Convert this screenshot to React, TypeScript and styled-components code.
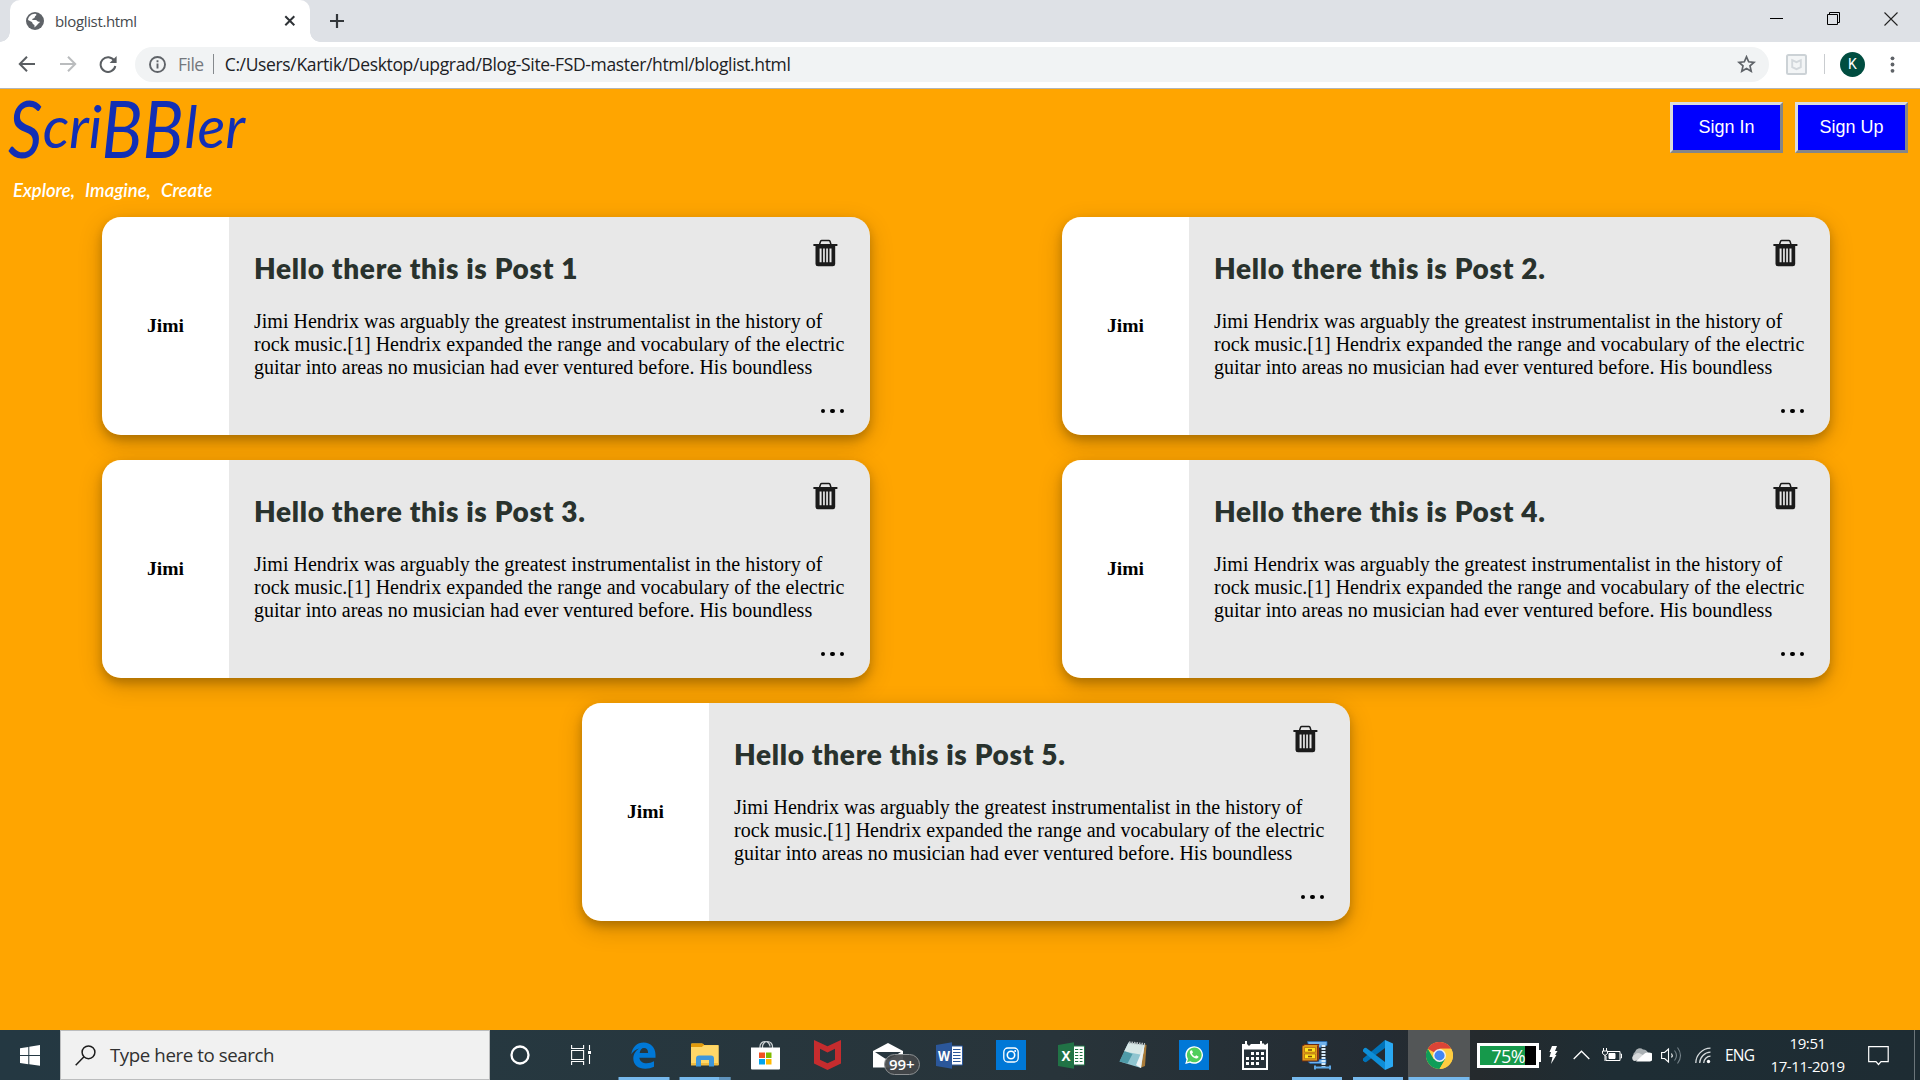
import React from 'react';
import styled, { createGlobalStyle } from 'styled-components';

const GlobalStyle = createGlobalStyle`
  * { box-sizing: border-box; }
  html, body { margin: 0; padding: 0; background: #ffa500; overflow: hidden; }
  svg { flex: none; display: block; }
`;

const ui = `'Open Sans', 'Noto Sans', sans-serif`;

const Screen = styled.div`
  display: flex;
  flex-direction: column;
  width: 1920px;
  height: 1080px;
  overflow: hidden;
  font-family: ${ui};
`;

/* ---------- browser ---------- */

const TabStrip = styled.header`
  display: flex;
  align-items: stretch;
  height: 42px;
  flex: none;
  padding-left: 10px;
  background: #dee1e6;
`;

const Tab = styled.div`
  position: relative;
  display: flex;
  align-items: center;
  width: 300px;
  padding: 0 14px 0 16px;
  background: #fff;
  border-radius: 10px 10px 0 0;
  &::before, &::after {
    content: '';
    position: absolute;
    bottom: 0;
    width: 10px;
    height: 10px;
  }
  &::before { left: -10px; background: radial-gradient(circle at 0 0, #dee1e6 9.5px, #fff 10px); }
  &::after { right: -10px; background: radial-gradient(circle at 100% 0, #dee1e6 9.5px, #fff 10px); }
`;

const TabTitle = styled.span`
  flex: 1;
  margin-left: 11px;
  color: #45494d;
  font-size: 15px;
  line-height: 20px;
  padding-bottom: 1px;
  letter-spacing: -0.35px;
`;

const NewTab = styled.div`
  display: flex;
  align-items: center;
  margin-left: 19px;
`;

const WindowButtons = styled.div`
  display: flex;
  align-items: center;
  margin-left: auto;
  height: 37px;
`;

const WindowButton = styled.div`
  display: flex;
  justify-content: center;
  width: 57px;
  padding-right: 1px;
`;

const Toolbar = styled.div`
  display: flex;
  align-items: center;
  height: 47px;
  flex: none;
  padding: 0 18px 2px 18px;
  background: #fff;
  border-bottom: 1px solid #b3b5b8;
`;

const NavIcon = styled.div<{ $gap: number }>`
  display: flex;
  margin-right: ${p => p.$gap}px;
`;

const Omnibox = styled.div`
  display: flex;
  align-items: center;
  width: 1634px;
  height: 35px;
  padding: 0 13px 0 14px;
  border-radius: 18px;
  background: #f1f3f4;
  font-size: 17.5px;
`;

const Scheme = styled.span`
  margin-left: 12px;
  color: #74787d;
  letter-spacing: -0.5px;
`;

const Rule = styled.span<{ $h: number; $color: string; $left?: number }>`
  flex: none;
  width: 1px;
  height: ${p => p.$h}px;
  margin-left: ${p => p.$left ?? 0}px;
  background: ${p => p.$color};
`;

const Url = styled.span`
  flex: 1;
  margin-left: 11px;
  color: #202124;
  white-space: nowrap;
  letter-spacing: -0.35px;
`;

const Extensions = styled.div`
  display: flex;
  align-items: center;
  margin-left: 17px;
`;

const Avatar = styled.div`
  display: grid;
  place-items: center;
  width: 25px;
  height: 25px;
  margin: 0 25px 0 15px;
  border-radius: 50%;
  background: #004d40;
  color: #fff;
  font: 14px Roboto, sans-serif;
`;

/* ---------- page ---------- */

const Page = styled.main`
  flex: 1;
  background: #ffa500;
`;

const PageHeader = styled.div`
  display: flex;
  justify-content: space-between;
  height: 128px;
  padding: 13px 12px 0 9px;
`;

const Brand = styled.div`
  margin-top: -5px;
  color: #122fb5;
  font-family: Lato, sans-serif;
  font-style: italic;
`;

const Wordmark = styled.div`
  height: 81px;
  line-height: 58px;
  font-size: 58px;
  white-space: nowrap;
`;

const Capital = styled.span`
  display: inline-block;
  margin: 0 -3px 0 -4px;
  font-size: 80px;
  line-height: 50px;
  vertical-align: -10px;
  transform: scaleX(0.85);
`;

const Tagline = styled.div`
  margin-left: 4px;
  color: #fff;
  font-size: 18.5px;
  font-weight: 600;
  line-height: 24px;
  white-space: nowrap;
  word-spacing: 6px;
`;

const Actions = styled.div`
  display: flex;
  gap: 12px;
`;

const ActionButton = styled.button`
  width: 113px;
  height: 51px;
  padding: 0;
  border: 3px solid;
  border-color: #dcdcdc #868686 #868686 #dcdcdc;
  background: #0000ff;
  color: #fff;
  font: 18px 'Liberation Sans', Arial, sans-serif;
`;

const Posts = styled.section`
  display: flex;
  flex-wrap: wrap;
  justify-content: center;
  gap: 25px 192px;
  width: 1728px;
  margin-left: 102px;
`;

const Card = styled.article`
  display: flex;
  width: 768px;
  height: 218px;
  border-radius: 19px;
  overflow: hidden;
  box-shadow: 0 5px 10px rgba(0, 0, 0, 0.2), 0 7.5px 25px rgba(0, 0, 0, 0.19);
`;

const Author = styled.div`
  display: grid;
  place-items: center;
  flex: none;
  width: 127px;
  background: #fff;
  color: #000;
  font: bold 19.6px 'Liberation Serif', 'Times New Roman', serif;
`;

const PostBody = styled.div`
  flex: 1;
  min-width: 0;
  display: flex;
  flex-direction: column;
  padding: 22px 25px 0;
  background: #e8e8e8;
`;

const PostHead = styled.div`
  display: flex;
  justify-content: space-between;
  height: 71px;
  padding-right: 7px;
`;

const PostTitle = styled.h2`
  margin: 11px 0 0;
  color: #29322d;
  font: 800 28px/36px Lato, sans-serif;
  letter-spacing: 0.68px;
`;

const PostText = styled.p`
  margin: 0;
  color: #000;
  font: 20px/23px 'Liberation Serif', 'Times New Roman', serif;
  white-space: pre;
`;

const More = styled.div`
  display: flex;
  gap: 5px;
  align-self: flex-end;
  margin-top: 30px;
  margin-right: 1px;
`;

const Dot = styled.i`
  width: 4.4px;
  height: 4.4px;
  border-radius: 50%;
  background: #000;
`;

/* ---------- taskbar ---------- */

const Taskbar = styled.footer`
  display: flex;
  height: 50px;
  flex: none;
  background: linear-gradient(90deg, #243842 0, #263840 25%, #28343a 55%, #242c33 72%, #252a2d 77%, #1e2d34 84%, #1e2c33 100%);
  color: #fff;
`;

const Cell = styled.div<{ $w: number; $active?: boolean }>`
  position: relative;
  display: flex;
  align-items: center;
  justify-content: center;
  flex: none;
  width: ${p => p.$w}px;
  background: ${p => (p.$active ? '#535657' : 'transparent')};
`;

const Underline = styled.span<{ $w: number }>`
  position: absolute;
  left: 50%;
  bottom: 0;
  width: ${p => p.$w}px;
  height: 3px;
  transform: translateX(-50%);
  background: #76b9ed;
`;

const UnderlineTail = styled.span`
  position: absolute;
  right: 5px;
  bottom: 0;
  width: 11px;
  height: 3px;
  background: #5f93bd;
`;

const SearchBox = styled.div`
  display: flex;
  align-items: center;
  flex: none;
  width: 430px;
  padding-left: 14px;
  border: 1px solid #bcbdbe;
  background: #f1f1f1;
  color: #303030;
  font-size: 18.7px;
  letter-spacing: -0.42px;
`;

const SearchText = styled.span`
  margin-left: 14px;
  padding-bottom: 1px;
`;

const MailBadge = styled.span`
  position: absolute;
  left: 26px;
  top: 24px;
  width: 36px;
  height: 21px;
  border: 1px solid #8d9193;
  border-radius: 11px;
  background: rgba(68, 71, 73, 0.93);
  font-size: 15px;
  font-weight: 600;
  line-height: 19px;
  text-align: center;
`;

const Battery = styled.div`
  position: relative;
  flex: none;
  width: 62px;
  height: 25px;
  margin-left: -1px;
  border: 3px solid #fff;
  background: linear-gradient(90deg, #16994b 45px, #000 45px);
  font-size: 18px;
  line-height: 20px;
  text-align: center;
  letter-spacing: -0.6px;
  &::after {
    content: '';
    position: absolute;
    right: -5px;
    top: 4px;
    width: 2px;
    height: 12px;
    background: #fff;
  }
`;

const Language = styled.span`
  font-size: 15.5px;
  letter-spacing: -0.7px;
`;

const Clock = styled.div`
  font-size: 15px;
  line-height: 23px;
  letter-spacing: -0.4px;
  text-align: center;
  white-space: nowrap;
`;

/* ---------- icons ---------- */

const Globe = () => (
  <svg width="18" height="18" viewBox="0 0 18 18">
    <circle cx="9" cy="9" r="9" fill="#5f6368" />
    <path d="M9 1.800c2 .2 2 1.400.7 2C8.400 4.200 9.500 5.500 8 6.200 6.700 6.700 6.300 6.500 6.300 8h3.200c1.800.2 1.700 1.600 3.400 1.700l1 .1c-.4 1.700-1.800 1.500-2.400 2.700-.6 1.200-1.700 1.300-2.800 2.900-.6-1 .3-2.500-.8-2.800-1.500-.4-1.200-2-2-2.700L2 8.100C2.400 4.600 5.200 1.900 9 1.800Z" fill="#fff" />
    <path d="M10.500 2.100c2.800.5 5 2.700 5.500 5.500l-1.400.8c-1-.1-1-1.300-2.100-1.500-1.400-.2-.5-2-1.700-2.300Z" fill="#5f6368" />
  </svg>
);

const Close = () => (
  <svg width="12" height="12" viewBox="0 0 12 12"><path d="M1.300 1.300l9 9M10.300 1.300l-9 9" stroke="#2f3337" strokeWidth="2" /></svg>
);

const Plus = () => (
  <svg width="16" height="16" viewBox="0 0 16 16"><path d="M8 1v14M1 8h14" stroke="#33373b" strokeWidth="2.200" /></svg>
);

const Arrow = ({ color, flip }: { color: string; flip?: boolean }) => (
  <svg width="18" height="18" viewBox="0 0 18 18" fill="none" stroke={color} strokeWidth="2">
    <path d={flip ? 'M1 9h15M9 1.800L16.200 9 9 16.200' : 'M17 9H2M9 1.800L1.800 9 9 16.200'} />
  </svg>
);

const Reload = () => (
  <svg width="18" height="18" viewBox="0 0 18 18">
    <path d="M15.300 5.600A7.400 7.400 0 1 0 16.300 11" fill="none" stroke="#5a5e62" strokeWidth="2" />
    <path d="M17.600 1v7h-7Z" fill="#5a5e62" />
  </svg>
);

const Info = () => (
  <svg width="17" height="17" viewBox="0 0 17 17">
    <circle cx="8.500" cy="8.500" r="7.500" fill="none" stroke="#5f6368" strokeWidth="1.900" />
    <path d="M8.500 7.500v5M8.500 4.300v1.900" stroke="#5f6368" strokeWidth="1.900" />
  </svg>
);

const Star = () => (
  <svg width="19" height="18" viewBox="0 0 19 18">
    <path d="M9.500 1.800l2.200 5 5.300.5-4 3.600 1.200 5.300-4.700-2.800-4.700 2.800L6 10.900 2 7.300l5.300-.5Z" fill="none" stroke="#5f6368" strokeWidth="1.700" />
  </svg>
);

const ShieldExt = () => (
  <svg width="21" height="21" viewBox="0 0 21 21">
    <rect x="1" y="1" width="19" height="19" rx="1.500" fill="#f3f5f6" stroke="#ccd2d6" strokeWidth="2" />
    <path d="M6.200 6.200l4.300 2 4.300-2v6.900l-4.300 2-4.300-2Z" fill="none" stroke="#d3d8dc" strokeWidth="1.900" />
  </svg>
);

const Kebab = () => (
  <svg width="5" height="17" viewBox="0 0 5 17" fill="#5f6368">
    <circle cx="2.500" cy="2.300" r="1.900" /><circle cx="2.500" cy="8.500" r="1.900" /><circle cx="2.500" cy="14.800" r="1.900" />
  </svg>
);

const Trash = () => (
  <svg width="25" height="28" viewBox="0 0 25 28">
    <path d="M6.500 5.500L7.600 2.300Q7.900 1.500 8.800 1.500h7Q16.700 1.500 17 2.300L18 5.500" fill="none" stroke="#1b1b1b" strokeWidth="1.500" />
    <path d="M.4 5h24v2H22.200V25Q22.200 27.300 19.700 27.300H5Q2.500 27.300 2.500 25V7H.4Z" fill="#1b1b1b" />
    <path d="M6.600 9.500h2V23.300h-2ZM10.100 9.500h1.700V23.300h-1.700ZM13.200 9.500h1.700V23.300h-1.700ZM16.500 9.500h2V23.300h-2Z" fill="#e8e8e8" />
  </svg>
);

const Windows = () => (
  <svg width="20" height="21" viewBox="0 0 20 21" fill="#fff">
    <path d="M0 3.200l8.300-1.300v8.100H0ZM9.300 1.700L20 0v10H9.300ZM0 11h8.300v8.200L0 18ZM9.300 11H20v9.800L9.300 19.300Z" />
  </svg>
);

const Magnifier = () => (
  <svg width="21" height="21" viewBox="0 0 21 21" fill="none" stroke="#1c1c1c" strokeWidth="1.500">
    <circle cx="13.500" cy="7.300" r="6.400" /><path d="M9 11.800L.7 20.200" />
  </svg>
);

const Ring = () => (
  <svg width="20" height="20" viewBox="0 0 20 20"><circle cx="10" cy="10" r="8.500" fill="none" stroke="#fff" strokeWidth="2.300" /></svg>
);

const TaskView = () => (
  <svg width="21" height="20" viewBox="0 0 21 20" fill="none" stroke="#fff" strokeWidth="1.100">
    <path d="M.6 0v3.500h12V0M.6 20v-3.500h12V20M.6 5.500h12v9H.6ZM18.500 0v5M18.500 10v9" /><path d="M17 6h3v3h-3Z" fill="#fff" stroke="none" />
  </svg>
);

const Edge = () => (
  <svg width="25" height="27" viewBox="0 0 25 27" fill="#0078d7">
    <path d="M.3 12.300C1.200 5 6 .4 12.700.4c7 0 11.800 5 11.800 12v3.300H8.400c.2 3.500 3.300 5.500 7.300 5.500 2.700 0 5-.7 7.300-2v5.600c-2.600 1.300-5.400 1.900-8.700 1.900C7.100 26.700 2.300 22.600 2.300 16.400c0-4.300 2.300-7.900 6.200-10C4.900 7 2 9.300.3 12.300ZM8.700 11h8.400c0-3.300-1.500-5-4.100-5-2.500 0-4 2-4.300 5Z" />
  </svg>
);

const Folder = () => (
  <svg width="28" height="24" viewBox="0 0 28 24">
    <path d="M0 1.500Q0 .5 1 .5h10L13 2H27.500V22H0Z" fill="#fdca4c" />
    <path d="M0 1.500Q0 .5 1 .5h10.300Q13 .5 13 2L11 4H0Z" fill="#e19a0b" />
    <path d="M0 4h11l2-1.500H27.500V22H0Z" fill="#ffd768" />
    <path d="M0 20h27.500v2.500H0Z" fill="#f2bc3f" />
    <path d="M5 23.500V15.500Q5 12.500 8 12.500h12Q23 12.500 23 15.500v8h-5V17H10v6.500Z" fill="#3e97dc" />
  </svg>
);

const Store = () => (
  <svg width="29" height="30" viewBox="0 0 29 30">
    <path d="M9 9V6.500a5 5 0 0 1 10 0M11.500 9V6.500a5 5 0 0 1 10 0V9" fill="none" stroke="#cfd4d6" strokeWidth="1.200" />
    <path d="M0 7.500h29V28.500Q29 29.500 28 29.500H1Q0 29.500 0 28.500Z" fill="#fff" />
    <path d="M8 12.500h6v5.500H8Z" fill="#f25022" /><path d="M15 12.500h5.500v5.500H15Z" fill="#7fba00" />
    <path d="M8 19h6v5.500H8Z" fill="#00a4ef" /><path d="M15 19h5.500v5.500H15Z" fill="#ffb900" />
  </svg>
);

const McAfee = () => (
  <svg width="27" height="30" viewBox="0 0 27 30">
    <path d="M0 0l13.500 6.300L27 0v23.500L13.500 30 0 23.500ZM6 8.800V19.800l7.500 3.500 7.500-3.500V8.800l-7.500 3.600Z" fill="#c62c2e" fillRule="evenodd" />
  </svg>
);

const Mail = () => (
  <svg width="30" height="25" viewBox="0 0 30 25">
    <path d="M0 8L15 0l15 8v16.500H0Z" fill="#fff" /><path d="M2 9h26l-12 7.500-4-1Z" fill="#27363e" />
  </svg>
);

const OfficeText = styled.text`
  fill: #fff;
  font: bold 14px 'Open Sans', sans-serif;
`;

const Office = ({ letter, color }: { letter: string; color: string }) => (
  <svg width="28" height="27" viewBox="0 0 28 27">
    <path d="M14 4h12.500v19H14Z" fill="#fff" stroke={color} />
    <path d="M17 7.500h7.500M17 10.500h7.500M17 13.500h7.500M17 16.500h7.500M17 19.500h7.500" stroke={color} strokeWidth="1.200" />
    {letter === 'X' && <path d="M21 5v17" stroke="#fff" strokeWidth="1.500" />}
    <path d="M0 3L16 .2v26.600L0 24Z" fill={color} />
    <OfficeText x="8" y="18.500" textAnchor="middle" textLength={letter === 'W' ? 12 : 9} lengthAdjust="spacingAndGlyphs">{letter}</OfficeText>
  </svg>
);

const Instagram = () => (
  <svg width="30" height="30" viewBox="0 0 30 30">
    <path d="M0 0h30v30H0Z" fill="#0078d7" />
    <g fill="none" stroke="#fff" strokeWidth="1.300"><rect x="7.800" y="8" width="14.400" height="14" rx="4" /><circle cx="15" cy="15" r="3.700" strokeWidth="1.600" /></g>
    <circle cx="19.200" cy="10.900" r="1" fill="#fff" />
  </svg>
);

const Notepad = () => (
  <svg width="28" height="28" viewBox="0 0 28 28">
    <path d="M25 3l2.500 1-1.500 21-5 2Z" fill="#a97b39" />
    <path d="M9.500 1.500L25.500 4 22 27 .5 20.500Z" fill="#8fc5d0" />
    <path d="M9.500 1.500L25.500 4 24 14 5 10.500Z" fill="#d8e8e7" />
    <path d="M5.500 10l8 3-5 9.500L.5 20.500Z" fill="#388c9b" opacity=".75" />
    <path d="M25.500 4L22 27l-5-3Z" fill="#eef3f4" />
    <path d="M10 1.500l16 1.800" stroke="#b8bfc1" strokeWidth="2.500" strokeDasharray="1.500 1" />
  </svg>
);

const WhatsApp = () => (
  <svg width="30" height="30" viewBox="0 0 30 30">
    <path d="M0 0h30v30H0Z" fill="#0078d7" />
    <path d="M6.200 24l1.300-4.600A8.800 8.800 0 1 1 10.800 22.700Z" fill="#fff" />
    <path d="M8 22.200l1-3.300a7.400 7.400 0 1 1 2.300 2.300Z" fill="#4fce5d" />
    <path d="M11.700 10.400c-2.300 1.700.6 5.500 3 7.100 2.300 1.500 4 1.400 5-.8l-2.500-1.400-1.200 1.200c-1.300-.4-2.500-1.600-3-3l1-1.100-1-2.100Z" fill="#fff" />
  </svg>
);

const Calendar = () => (
  <svg width="26" height="30" viewBox="0 0 26 30" fill="#fff">
    <path d="M0 4h3V1h2v3l2 2 2-2h9V1h2v3l1-1 2 2 3-2V30H0Z" />
    <path d="M2 9.500h22V28H2Z" fill="#27323a" />
    <path d="M9 12h3v3H9ZM14 12h3v3h-3ZM19 12h3v3h-3ZM4 17h3v3H4ZM9 17h3v3H9ZM14 17h3v3h-3ZM19 17h3v3h-3ZM4 22h3v3H4ZM9 22h3v3H9ZM14 22h3v3h-3Z" />
  </svg>
);

const Zip = () => (
  <svg width="29" height="29" viewBox="0 0 29 29">
    <path d="M5.500.5H25v4h-6v2H7Z" fill="#71b3ed" stroke="#2569b3" strokeWidth=".8" />
    <path d="M6 20.500h11v-2h7v4H8Z" fill="#71b3ed" stroke="#2569b3" strokeWidth=".8" />
    <path d="M0 5l3-1.500h14L15.500 5V20H0Z" fill="#e19b1c" stroke="#6b2913" />
    <path d="M15.500 5L17 3.500V18l-1.500 2Z" fill="#923a17" />
    <path d="M2.500 6.500h11v4.700h-11ZM2.500 13h11v4.700h-11Z" fill="#ffe21d" stroke="#a86410" strokeWidth=".7" />
    <path d="M6 9h4M6 15.500h4" stroke="#7d4010" strokeWidth="1.500" />
    <path d="M21.500 4v23" stroke="#d7ebfa" strokeWidth="4" strokeDasharray="2 1" />
    <path d="M13 26.500h15M13 24.500v4M28 24.500v4" stroke="#5ea9e8" strokeWidth="2" />
  </svg>
);

const Code = () => (
  <svg width="30" height="30" viewBox="0 0 30 30">
    <path d="M22 0v8L3 22.300 1.500 22 0 20.500v-2Z" fill="#0073b9" />
    <path d="M22 30v-8L3 7.700 1.500 8 0 9.500v2Z" fill="#0e8ed7" />
    <path d="M22 0l8 3.500v23L22 30Z" fill="#2aa9f2" />
  </svg>
);

const Chrome = () => (
  <svg width="27" height="27" viewBox="0 0 48 48">
    <circle cx="24" cy="24" r="24" fill="#ffcd40" />
    <path d="M24 24L3.200 12A24 24 0 0 1 44.800 12H24Z" fill="#db4437" />
    <path d="M3.200 12A24 24 0 0 0 24 48L34.400 30 24 24 13.600 30Z" fill="#0f9d58" />
    <path d="M24 12h20.800A24 24 0 0 1 24 48L34.400 30Z" fill="#ffcd40" />
    <circle cx="24" cy="24" r="11.500" fill="#f1f1f1" /><circle cx="24" cy="24" r="9" fill="#4285f4" />
  </svg>
);

const Bolt = () => (
  <svg width="9" height="18" viewBox="0 0 9 18"><path d="M3 0h5L6 5h2.500L6 9h1.500L2 18l1.500-7H.5l1.500-5H.5Z" fill="#fff" /></svg>
);
const Caret = () => (
  <svg width="17" height="10" viewBox="0 0 17 10"><path d="M.7 9L8.500 1.200 16.300 9" fill="none" stroke="#fff" strokeWidth="1.300" /></svg>
);
const Plug = () => (
  <svg width="20" height="14" viewBox="0 0 20 14" fill="none" stroke="#fff">
    <path d="M5 3.500h13v9H4V8M18.500 6h1v4h-1M1.500 0v3M4.500 0v3M.5 3h5v2.500L3 7.500.5 5.500ZM3 7v6" /><path d="M7 5.500h6v5H7Z" fill="#fff" />
  </svg>
);
const Cloud = () => (
  <svg width="20" height="14" viewBox="0 0 20 14">
    <path d="M3 10a3.500 3.500 0 0 1 0-6A5 5 0 0 1 11 1.500 5 5 0 0 1 16 5L7 10Z" fill="#abb1b4" />
    <path d="M2 13a3.500 3.500 0 0 1 1-6.500 5 5 0 0 1 6-.5L18 11Z" fill="#d6d9da" />
    <path d="M4 13.500L12 6a4 4 0 0 1 4-1.500 4.500 4.500 0 0 1 2 9Z" fill="#fff" />
  </svg>
);
const Speaker = () => (
  <svg width="21" height="19" viewBox="0 0 21 19" fill="none" stroke="#fff" strokeWidth="1.100">
    <path d="M.6 6.500h3L7.500 3v13l-3.900-3.500h-3ZM10.500 7.500q1.500 2 0 4" /><path d="M13.500 4.500q4 5 0 10M16.500 1.500q6 8 0 16" stroke="#76838a" />
  </svg>
);
const Wifi = () => (
  <svg width="16" height="17" viewBox="0 0 16 17" fill="none" stroke="#d7dcde" strokeWidth="1.300">
    <path d="M.8 16A15 15 0 0 1 15.500 1.200M4.700 16A11 11 0 0 1 15.500 5.200M8.700 16A7 7 0 0 1 15.500 9.200" /><circle cx="13.500" cy="14.500" r="1.700" fill="#fff" stroke="none" />
  </svg>
);
const Notice = () => (
  <svg width="21" height="21" viewBox="0 0 21 21"><path d="M.7 1.700h19.500v15H13L10.500 19.500 8 16.700H.7Z" fill="none" stroke="#fff" strokeWidth="1.200" /></svg>
);

const titles = ['Post 1', 'Post 2.', 'Post 3.', 'Post 4.', 'Post 5.'];
const excerpt = `Jimi Hendrix was arguably the greatest instrumentalist in the history of
rock music.[1] Hendrix expanded the range and vocabulary of the electric
guitar into areas no musician had ever ventured before. His boundless`;

const apps: { icon: React.ReactNode; line?: number; active?: boolean; tail?: boolean }[] = [
  { icon: <Edge />, line: 51 },
  { icon: <Folder />, line: 51, tail: true },
  { icon: <Store /> },
  { icon: <McAfee /> },
  { icon: <><Mail /><MailBadge>99+</MailBadge></> },
  { icon: <Office letter="W" color="#2b579a" /> },
  { icon: <Instagram /> },
  { icon: <Office letter="X" color="#217346" /> },
  { icon: <Notepad /> },
  { icon: <WhatsApp /> },
  { icon: <Calendar /> },
  { icon: <Zip />, line: 50 },
  { icon: <Code />, line: 50 },
  { icon: <Chrome />, line: 61, active: true },
];

const PostCard = ({ title }: { title: string }) => (
  <Card>
    <Author>Jimi</Author>
    <PostBody>
      <PostHead>
        <PostTitle>Hello there this is {title}</PostTitle>
        <Trash />
      </PostHead>
      <PostText>{excerpt}</PostText>
      <More><Dot /><Dot /><Dot /></More>
    </PostBody>
  </Card>
);

export default function App() {
  return (
    <Screen>
      <GlobalStyle />
      <TabStrip>
        <Tab><Globe /><TabTitle>bloglist.html</TabTitle><Close /></Tab>
        <NewTab><Plus /></NewTab>
        <WindowButtons>
          <WindowButton><svg width="14" height="14"><path d="M0 6.500h13" stroke="#000" /></svg></WindowButton>
          <WindowButton><svg width="14" height="14" fill="none" stroke="#000"><path d="M.5 2.500h10v10H.5ZM2.500 2.500v-2h10v10h-2" /></svg></WindowButton>
          <WindowButton><svg width="14" height="14"><path d="M.5.500l13 13M13.500.500l-13 13" stroke="#222" strokeWidth="1.100" /></svg></WindowButton>
        </WindowButtons>
      </TabStrip>
      <Toolbar>
        <NavIcon $gap={23}><Arrow color="#5a5e62" /></NavIcon>
        <NavIcon $gap={22}><Arrow color="#babcbe" flip /></NavIcon>
        <NavIcon $gap={18}><Reload /></NavIcon>
        <Omnibox>
          <Info />
          <Scheme>File</Scheme>
          <Rule $h={20} $color="#85898d" $left={9} />
          <Url>C:/Users/Kartik/Desktop/upgrad/Blog-Site-FSD-master/html/bloglist.html</Url>
          <Star />
        </Omnibox>
        <Extensions>
          <NavIcon $gap={17}><ShieldExt /></NavIcon>
          <Rule $h={20} $color="#c9cccf" />
          <Avatar>K</Avatar>
          <Kebab />
        </Extensions>
      </Toolbar>
      <Page>
        <PageHeader>
          <Brand>
            <Wordmark><Capital>S</Capital>cri<Capital>B</Capital><Capital>B</Capital>ler</Wordmark>
            <Tagline>Explore, Imagine, Create</Tagline>
          </Brand>
          <Actions>
            <ActionButton>Sign In</ActionButton>
            <ActionButton>Sign Up</ActionButton>
          </Actions>
        </PageHeader>
        <Posts>{titles.map(t => <PostCard key={t} title={t} />)}</Posts>
      </Page>
      <Taskbar>
        <Cell $w={60}><Windows /></Cell>
        <SearchBox><Magnifier /><SearchText>Type here to search</SearchText></SearchBox>
        <Cell $w={60}><Ring /></Cell>
        <Cell $w={63}><TaskView /></Cell>
        {apps.map((a, i) => (
          <Cell key={i} $w={61.2} $active={a.active}>
            {a.icon}
            {a.line && <Underline $w={a.line} />}
            {a.tail && <UnderlineTail />}
          </Cell>
        ))}
        <Cell $w={78}><Battery>75%</Battery></Cell>
        <Cell $w={12}><Bolt /></Cell>
        <Cell $w={44}><Caret /></Cell>
        <Cell $w={16}><Plug /></Cell>
        <Cell $w={44}><Cloud /></Cell>
        <Cell $w={16}><Speaker /></Cell>
        <Cell $w={46}><Wifi /></Cell>
        <Cell $w={28}><Language>ENG</Language></Cell>
        <Cell $w={108}><Clock>19:51<br />17-11-2019</Clock></Cell>
        <Cell $w={34}><Notice /></Cell>
        <Cell $w={24}><Rule $h={50} $color="#6b757a" $left={13} /></Cell>
      </Taskbar>
    </Screen>
  );
}
